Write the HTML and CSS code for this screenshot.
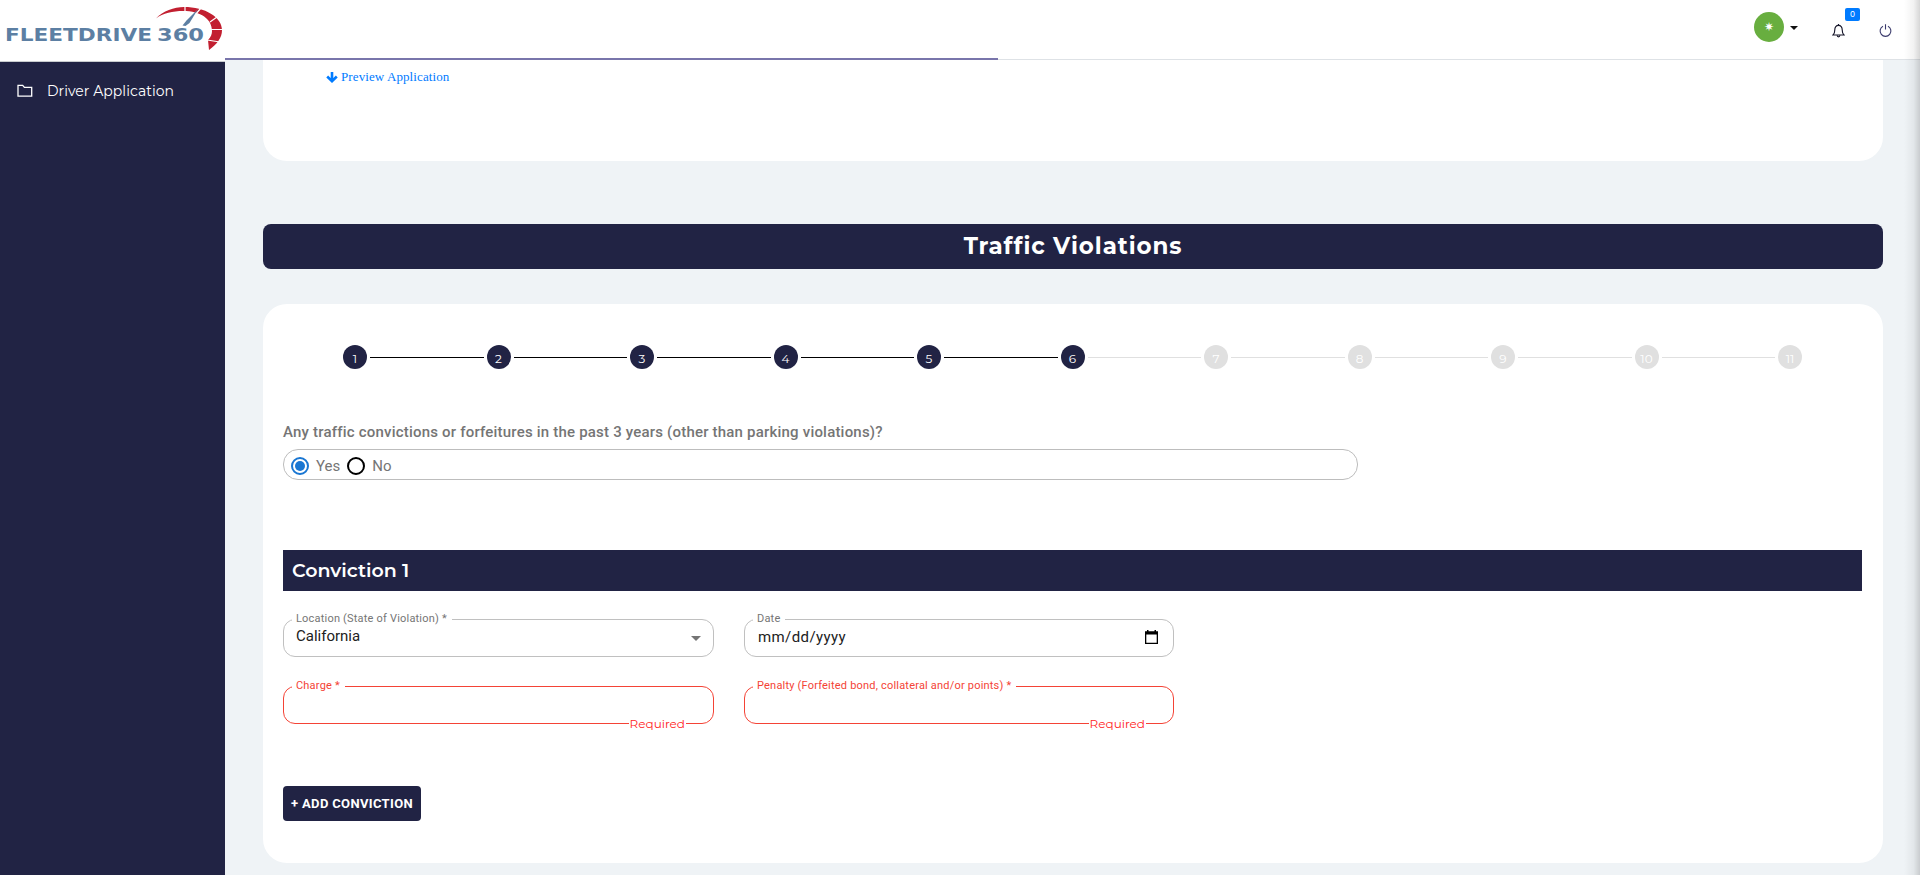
FILE: index.html
```html
<!DOCTYPE html>
<html lang="en">
<head>
<meta charset="utf-8">
<title>FleetDrive 360</title>
<link rel="stylesheet" href="styles.css">
</head>
<body>
<div class="app">
  <aside class="sidebar">
    <div class="brand">
      <svg width="225" height="61" viewBox="0 0 225 61">
        <text class="brand-name" x="5" y="41" textLength="147" lengthAdjust="spacingAndGlyphs">FLEETDRIVE</text>
        <text class="brand-name" x="157" y="41" textLength="47" lengthAdjust="spacingAndGlyphs">360</text>
        <path fill="#c21f30" d="M156 18.500C163 11 174 7 184 7c21 0 38 10 38 23 0 8-5 14-13 20l-1-10c3-3 4-6 4-9 0-12-11-20-29-20-10 0-20 2-27 7.500z"/>
        <path stroke="#fff" stroke-width="1.200" fill="none" d="M185 6v6M201 8l-6 7M217 17l-7 5M223 29.500h-12M220 42l-13-2"/>
        <path fill="#5c7fa3" d="M198 9l-8.500 14-4 3-3-.5 4-5z"/>
      </svg>
    </div>
    <nav class="menu">
      <a class="menu-item">
        <svg width="16" height="14" viewBox="0 0 16 14" fill="none" stroke="#fff" stroke-width="1.300"><path d="M1 12.200V1.300h4.700l1.700 2h7.300v8.900z"/></svg>
        <span>Driver Application</span>
      </a>
    </nav>
  </aside>
  <div class="main">
    <header class="topbar">
      <div class="progress"></div>
      <div class="avatar">✷</div>
      <span class="caret"></span>
      <div class="bell">
        <svg width="13" height="14" viewBox="0 0 13 14" fill="none" stroke="#17172b" stroke-width="1.150"><path d="M1 11h11c-1.500-1.400-1.800-2.500-1.800-5.300C10.200 3 8.800 1.400 6.500 1.400S2.800 3 2.800 5.700C2.800 8.500 2.500 9.600 1 11z"/><path d="M5.200 11.300c0 2 2.600 2 2.600 0M6.500 0v1.400"/></svg>
        <span class="badge">0</span>
      </div>
      <svg class="power" width="13" height="14" viewBox="0 0 13 14" fill="none" stroke="#39396b" stroke-width="1.100"><path d="M4 2.200a5.400 5.400 0 1 0 5 0M6.500 .3v5.200"/></svg>
    </header>
    <section class="card card-preview">
      <a class="preview">
        <svg width="12" height="11" viewBox="0 0 12 11" fill="none" stroke="#007bff" stroke-width="2.600"><path d="M6 0v9M1.200 4.500L6 9.200l4.800-4.700"/></svg>
        <span>Preview Application</span>
      </a>
    </section>
    <h1 class="title"><span>Traffic Violations</span></h1>
    <section class="card card-form">
      <div class="stepper">
        <i class="step done">1</i><b class="line done"></b>
        <i class="step done">2</i><b class="line done"></b>
        <i class="step done">3</i><b class="line done"></b>
        <i class="step done">4</i><b class="line done"></b>
        <i class="step done">5</i><b class="line done"></b>
        <i class="step done">6</i><b class="line"></b>
        <i class="step">7</i><b class="line"></b>
        <i class="step">8</i><b class="line"></b>
        <i class="step">9</i><b class="line"></b>
        <i class="step">10</i><b class="line"></b>
        <i class="step">11</i>
      </div>
      <div class="question"><span>Any traffic convictions or forfeitures in the past 3 years (other than parking violations)?</span></div>
      <div class="radios">
        <span class="radio on"></span><span class="radio-label">Yes</span>
        <span class="radio"></span><span class="radio-label">No</span>
      </div>
      <h2 class="conviction"><span>Conviction 1</span></h2>
      <div class="fields">
        <fieldset class="field">
          <legend>Location (State of Violation) *</legend>
          <div class="value up"><span>California</span><i class="arrow"></i></div>
        </fieldset>
        <fieldset class="field">
          <legend>Date</legend>
          <div class="value date"><span>mm/dd/yyyy</span>
            <svg class="calendar" width="13" height="14" viewBox="0 0 13 14"><path fill="#000" fill-rule="evenodd" d="M0 1.300h2V0h1.500v1.300h6V0H11v1.300h2V14H0zM1.300 4.500v8.200h10.400V4.500z"/></svg>
          </div>
        </fieldset>
        <fieldset class="field error">
          <legend>Charge *</legend>
          <span class="required">Required</span>
        </fieldset>
        <fieldset class="field error">
          <legend>Penalty (Forfeited bond, collateral and/or points) *</legend>
          <span class="required">Required</span>
        </fieldset>
      </div>
      <button class="add">+ ADD CONVICTION</button>
    </section>
  </div>
  <div class="edge"></div>
</div>
</body>
</html>
```
FILE: styles.css
```css
* { box-sizing: border-box; }
body { margin: 0; overflow: hidden; background: #eff3f6; font-family: Roboto, "Liberation Sans", sans-serif; }
.app { position: relative; display: flex; height: 875px; }
.sidebar { width: 225px; flex: none; background: #212344; }
.brand { height: 62px; background: #fff; border-bottom: 1px solid #c9cccf; }
.brand svg { display: block; }
.brand-name { font: bold 17px "DejaVu Sans", sans-serif; fill: #5c7fa3; }
.menu { padding: 19px 17px; }
.menu-item { display: flex; align-items: center; gap: 14px; height: 20px; color: #fff; font: 14px/20px Montserrat, Inter, sans-serif; letter-spacing: .04px; }
.main { flex: 1; min-width: 0; }
.topbar { position: relative; display: flex; align-items: flex-start; height: 60px; padding: 12px 28px 0 0; justify-content: flex-end; background: #fff; border-bottom: 1px solid #dee2e6; }
.progress { position: absolute; left: 0; bottom: -1px; width: 773px; height: 2px; background: #7975ab; }
.avatar { width: 30px; height: 30px; border-radius: 50%; background: #68ae3f; color: #fff; font: bold 12px/30px "DejaVu Sans", sans-serif; text-align: center; }
.caret { margin: 14px 34px 0 6px; border: 4px solid transparent; border-top-color: #111; border-bottom: 0; }
.bell { position: relative; height: 14px; margin: 12px 34px 0 0; }
.bell svg, .power { display: block; }
.badge { position: absolute; left: 13px; top: -16px; width: 15px; height: 13px; border-radius: 2px; background: #007bff; color: #fff; font: 8px/13px Inter, sans-serif; text-align: center; }
.power { margin-top: 12px; }
.card { margin: 0 37px 0 38px; background: #fff; }
.card-preview { height: 101px; padding: 8px 0 0 63px; border-radius: 0 0 24px 24px; }
.preview { display: flex; align-items: center; gap: 3px; height: 18px; color: #007bff; font: 13px/18px "Liberation Serif", serif; letter-spacing: .1px; }
.title { display: flex; align-items: center; justify-content: center; height: 45px; margin: 63px 37px 35px 38px; border-radius: 8px; background: #212344; color: #fff; font: bold 23px/45px Montserrat, Inter, sans-serif; letter-spacing: .9px; }
.card-form { height: 559px; padding: 41px 21px 0 20px; border-radius: 24px; }
.stepper { display: flex; align-items: center; gap: 3px; width: 1459px; height: 24px; margin-left: 60px; }
.step { flex: none; width: 24px; height: 24px; border-radius: 50%; background: #e0e0e0; color: #fff; font: normal 12px/28px Montserrat, Inter, sans-serif; text-align: center; }
.step.done { background: #212344; }
.line { flex: 1; height: 1px; margin-top: 1px; background: #e0e0e0; }
.line.done { background: #000; }
.question { height: 20px; margin-top: 53px; color: #757575; font-weight: 500; font-size: 15px; line-height: 20px; letter-spacing: .2px; white-space: nowrap; }
.radios { display: flex; align-items: center; width: 1075px; height: 31px; margin-top: 7px; padding: 2px 0 0 7px; border: 1px solid #bdbdbd; border-radius: 15px; color: #757575; font-size: 15px; }
.radio { display: flex; align-items: center; justify-content: center; width: 18px; height: 18px; border: 2px solid #000; border-radius: 50%; }
.radio.on { border-color: #1976d2; }
.radio.on::after { content: ""; width: 10px; height: 10px; border-radius: 50%; background: #1976d2; }
.radio-label { margin: 0 7px; }
.conviction { height: 41px; margin: 70px 0 0; padding-left: 9px; background: #212344; color: #fff; font: 600 19px/42px Montserrat, Inter, sans-serif; }
.fields { display: grid; grid-template-columns: 431px 430px; column-gap: 30px; row-gap: 23px; margin-top: 22px; }
.field { position: relative; min-width: 0; height: 44px; margin: 0; padding: 0 8px; border: 1px solid #c0c0c0; border-radius: 12px; }
legend { height: 12px; padding: 0 5px 0 4px; color: #757575; font-size: 11px; line-height: 12px; letter-spacing: .2px; white-space: nowrap; }
.value { display: flex; justify-content: space-between; height: 20px; padding: 2px 4px 0; color: #212121; font-size: 15px; line-height: 20px; }
.up { padding-top: 1px; }
.arrow { margin: 10px 0 0; border: 5px solid transparent; border-top-color: #757575; border-bottom: 0; height: 5px; }
.date { padding-left: 5px; letter-spacing: .4px; }
.calendar { margin: 3px 3px 0 0; }
.error { border-color: #f44336; }
.error legend { color: #f44336; }
.required { position: absolute; right: 27px; bottom: -8px; padding: 0 1px; background: #fff; color: #f22; font: 12px/15px Montserrat, Inter, sans-serif; }
.add { display: block; width: 138px; height: 35px; margin-top: 62px; padding: 0; border: 0; border-radius: 4px; background: #212344; color: #fff; font: bold 13px/35px Roboto, sans-serif; letter-spacing: .35px; white-space: nowrap; }
.edge { position: absolute; right: 0; top: 0; width: 16px; height: 875px; background: linear-gradient(to right, rgba(0,0,0,0), rgba(0,0,0,.05) 60%, rgba(0,0,0,.16)); }
```
